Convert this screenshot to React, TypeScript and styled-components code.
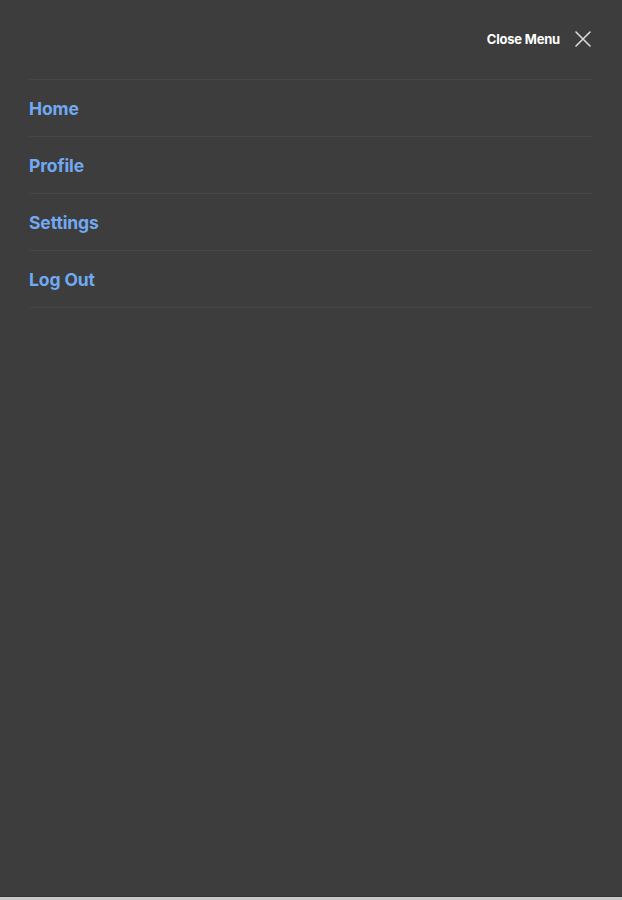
import styled, { createGlobalStyle } from 'styled-components'

const GlobalStyle = createGlobalStyle`
  html, body {
    margin: 0;
    padding: 0;
    background: #c9c9c9;
  }
  * {
    box-sizing: border-box;
  }
`

const Panel = styled.nav`
  height: 897px;
  background: #3d3d3d;
  border-bottom: 1px solid #343434;
  padding: 0 30px 0 29px;
  font-family: Inter, "Liberation Sans", sans-serif;
`

const Header = styled.div`
  display: flex;
  justify-content: flex-end;
  align-items: center;
  height: 80px;
  padding-bottom: 1px;
  border-bottom: 1px solid #464646;
`

const CloseButton = styled.button`
  display: flex;
  align-items: center;
  gap: 14px;
  background: none;
  border: none;
  padding: 0;
  color: #ffffff;
  font-family: inherit;
  font-size: 13px;
  font-weight: 700;
  letter-spacing: -0.2px;
  cursor: pointer;
`

const MenuList = styled.ul`
  list-style: none;
  margin: 0;
  padding: 0;
`

const MenuItem = styled.li`
  display: flex;
  align-items: center;
  height: 57px;
  padding-top: 1px;
  border-bottom: 1px solid #464646;
`

const MenuLink = styled.a`
  color: #71a9f2;
  font-size: 17.5px;
  font-weight: 700;
  letter-spacing: -0.1px;
  text-decoration: none;
`

const items = ['Home', 'Profile', 'Settings', 'Log Out']

const App = () => {
  return (
    <>
      <GlobalStyle />
      <Panel>
        <Header>
          <CloseButton>
            Close Menu
            <svg width="18" height="18" viewBox="0 0 18 18" fill="none">
              <path d="M2 2 L16 16 M16 2 L2 16" stroke="#d9d9d9" strokeWidth="1.6" strokeLinecap="round" />
            </svg>
          </CloseButton>
        </Header>
        <MenuList>
          {items.map(item => (
            <MenuItem key={item}>
              <MenuLink href="#">{item}</MenuLink>
            </MenuItem>
          ))}
        </MenuList>
      </Panel>
    </>
  )
}

export default App
